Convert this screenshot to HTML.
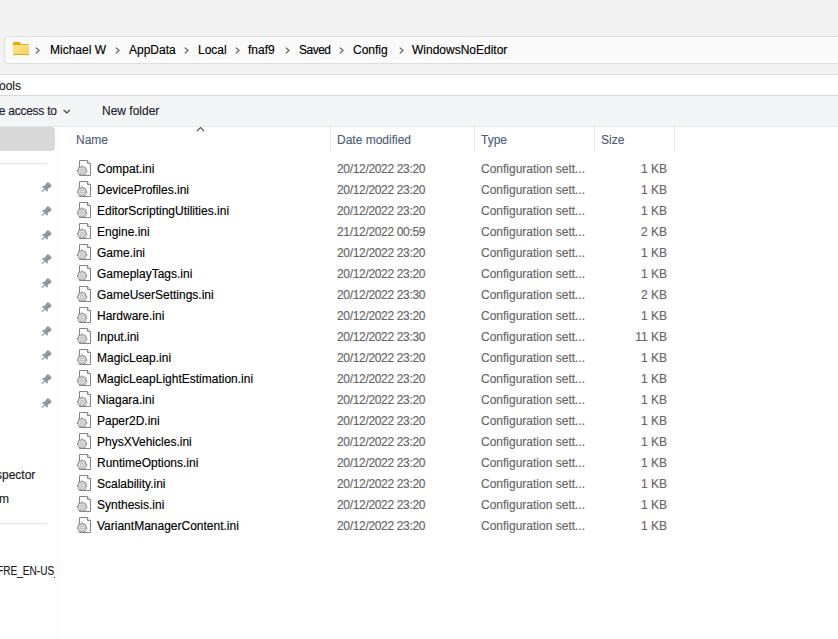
<!DOCTYPE html>
<html><head><meta charset="utf-8"><style>
*{margin:0;padding:0;box-sizing:border-box}
html,body{width:838px;height:639px;overflow:hidden;background:#f3f3f3;font-family:"Liberation Sans",sans-serif;font-size:12px}
.t{position:absolute;white-space:nowrap;line-height:16px;color:#1a1a1a;-webkit-text-stroke:0.15px currentColor}
.gr{color:#666}
.fn{color:#000}
.bc{color:#000}
.tb{color:#1c2130}
.dt{letter-spacing:-0.33px}
.hd{color:#4c607a}
.ic{display:block}
.pin{display:block}
</style></head><body>
<div style="position:absolute;left:4px;top:36px;width:900px;height:28px;background:#fafafa;border:1px solid #dedede;border-radius:4px"></div>
<svg style="position:absolute;left:13px;top:42px" width="16" height="13" viewBox="0 0 16 13"><defs><linearGradient id="fg" x1="0" y1="0" x2="1" y2="1"><stop offset="0" stop-color="#ffe7a0"/><stop offset="1" stop-color="#fccf4c"/></linearGradient></defs><path d="M0 1.2Q0 0 1.2 0H6.8L8.2 1.9H14.8Q16 1.9 16 3.1V5H0Z" fill="#eda90c"/><path d="M0 3.6H7L8 2.9H16V11.8Q16 13 14.8 13H1.2Q0 13 0 11.8Z" fill="url(#fg)"/><path d="M0 3.6H7L8 2.9H16V3.5H8.2L7.2 4.2H0Z" fill="#ffefb8"/><path d="M0 11.9H16V11.8Q16 13 14.8 13H1.2Q0 13 0 11.8Z" fill="#eaa520"/></svg>
<svg style="position:absolute;left:35px;top:47px" width="5" height="7" viewBox="0 0 5 7"><path d="M0.8 0.6L4 3.5L0.8 6.4" fill="none" stroke="#5d5d5d" stroke-width="1.2"/></svg><svg style="position:absolute;left:115px;top:47px" width="5" height="7" viewBox="0 0 5 7"><path d="M0.8 0.6L4 3.5L0.8 6.4" fill="none" stroke="#5d5d5d" stroke-width="1.2"/></svg><svg style="position:absolute;left:184px;top:47px" width="5" height="7" viewBox="0 0 5 7"><path d="M0.8 0.6L4 3.5L0.8 6.4" fill="none" stroke="#5d5d5d" stroke-width="1.2"/></svg><svg style="position:absolute;left:235px;top:47px" width="5" height="7" viewBox="0 0 5 7"><path d="M0.8 0.6L4 3.5L0.8 6.4" fill="none" stroke="#5d5d5d" stroke-width="1.2"/></svg><svg style="position:absolute;left:285px;top:47px" width="5" height="7" viewBox="0 0 5 7"><path d="M0.8 0.6L4 3.5L0.8 6.4" fill="none" stroke="#5d5d5d" stroke-width="1.2"/></svg><svg style="position:absolute;left:339px;top:47px" width="5" height="7" viewBox="0 0 5 7"><path d="M0.8 0.6L4 3.5L0.8 6.4" fill="none" stroke="#5d5d5d" stroke-width="1.2"/></svg><svg style="position:absolute;left:399px;top:47px" width="5" height="7" viewBox="0 0 5 7"><path d="M0.8 0.6L4 3.5L0.8 6.4" fill="none" stroke="#5d5d5d" stroke-width="1.2"/></svg>
<div class="t bc" style="left:50px;top:42px;">Michael W</div><div class="t bc" style="left:129px;top:42px;">AppData</div><div class="t bc" style="left:198px;top:42px;">Local</div><div class="t bc" style="left:248px;top:42px;">fnaf9</div><div class="t bc" style="left:299px;top:42px;letter-spacing:-0.5px">Saved</div><div class="t bc" style="left:353px;top:42px;">Config</div><div class="t bc" style="left:412px;top:42px;">WindowsNoEditor</div>
<div style="position:absolute;left:0;top:74px;width:838px;height:22px;background:#fff;border-top:1px solid #dedede;border-bottom:1px solid #dadada"></div>
<div class="t " style="left:-7px;top:78px;">Tools</div>
<div style="position:absolute;left:0;top:96px;width:838px;height:31px;background:#f4f5f7;border-bottom:1px solid #e6e7e9"></div>
<div class="t tb" style="left:-18.5px;top:103px;letter-spacing:-0.25px">Give access to</div>
<svg style="position:absolute;left:63px;top:108.5px" width="8" height="5" viewBox="0 0 8 5"><path d="M0.6 0.8L3.8 4L7 0.8" fill="none" stroke="#2e3545" stroke-width="1.1"/></svg>
<div class="t tb" style="left:102px;top:103px;">New folder</div>
<div style="position:absolute;left:0;top:127px;width:838px;height:512px;background:#fff"></div>
<div style="position:absolute;left:57px;top:127px;width:1px;height:512px;background:#f3f3f3"></div>
<div style="position:absolute;left:-10px;top:127px;width:65px;height:24px;background:#d9d9d9;border-radius:3px"></div>
<div style="position:absolute;left:0;top:163px;width:47px;height:1px;background:#e0e0e0"></div>
<div style="position:absolute;left:41px;top:181px"><svg class="pin" width="12" height="12" viewBox="0 0 12 12"><g transform="translate(3.8 7.9) rotate(-45)" fill="#8e98a0"><rect x="-0.3" y="-3.6" width="1.7" height="7.2" rx="0.6"/><rect x="1" y="-2.3" width="2.8" height="4.6"/><rect x="3.3" y="-2.8" width="4" height="5.6" rx="1"/><rect x="-4.4" y="-0.6" width="4.4" height="1.2" rx="0.6"/></g></svg></div><div style="position:absolute;left:41px;top:205px"><svg class="pin" width="12" height="12" viewBox="0 0 12 12"><g transform="translate(3.8 7.9) rotate(-45)" fill="#8e98a0"><rect x="-0.3" y="-3.6" width="1.7" height="7.2" rx="0.6"/><rect x="1" y="-2.3" width="2.8" height="4.6"/><rect x="3.3" y="-2.8" width="4" height="5.6" rx="1"/><rect x="-4.4" y="-0.6" width="4.4" height="1.2" rx="0.6"/></g></svg></div><div style="position:absolute;left:41px;top:229px"><svg class="pin" width="12" height="12" viewBox="0 0 12 12"><g transform="translate(3.8 7.9) rotate(-45)" fill="#8e98a0"><rect x="-0.3" y="-3.6" width="1.7" height="7.2" rx="0.6"/><rect x="1" y="-2.3" width="2.8" height="4.6"/><rect x="3.3" y="-2.8" width="4" height="5.6" rx="1"/><rect x="-4.4" y="-0.6" width="4.4" height="1.2" rx="0.6"/></g></svg></div><div style="position:absolute;left:41px;top:253px"><svg class="pin" width="12" height="12" viewBox="0 0 12 12"><g transform="translate(3.8 7.9) rotate(-45)" fill="#8e98a0"><rect x="-0.3" y="-3.6" width="1.7" height="7.2" rx="0.6"/><rect x="1" y="-2.3" width="2.8" height="4.6"/><rect x="3.3" y="-2.8" width="4" height="5.6" rx="1"/><rect x="-4.4" y="-0.6" width="4.4" height="1.2" rx="0.6"/></g></svg></div><div style="position:absolute;left:41px;top:277px"><svg class="pin" width="12" height="12" viewBox="0 0 12 12"><g transform="translate(3.8 7.9) rotate(-45)" fill="#8e98a0"><rect x="-0.3" y="-3.6" width="1.7" height="7.2" rx="0.6"/><rect x="1" y="-2.3" width="2.8" height="4.6"/><rect x="3.3" y="-2.8" width="4" height="5.6" rx="1"/><rect x="-4.4" y="-0.6" width="4.4" height="1.2" rx="0.6"/></g></svg></div><div style="position:absolute;left:41px;top:301px"><svg class="pin" width="12" height="12" viewBox="0 0 12 12"><g transform="translate(3.8 7.9) rotate(-45)" fill="#8e98a0"><rect x="-0.3" y="-3.6" width="1.7" height="7.2" rx="0.6"/><rect x="1" y="-2.3" width="2.8" height="4.6"/><rect x="3.3" y="-2.8" width="4" height="5.6" rx="1"/><rect x="-4.4" y="-0.6" width="4.4" height="1.2" rx="0.6"/></g></svg></div><div style="position:absolute;left:41px;top:325px"><svg class="pin" width="12" height="12" viewBox="0 0 12 12"><g transform="translate(3.8 7.9) rotate(-45)" fill="#8e98a0"><rect x="-0.3" y="-3.6" width="1.7" height="7.2" rx="0.6"/><rect x="1" y="-2.3" width="2.8" height="4.6"/><rect x="3.3" y="-2.8" width="4" height="5.6" rx="1"/><rect x="-4.4" y="-0.6" width="4.4" height="1.2" rx="0.6"/></g></svg></div><div style="position:absolute;left:41px;top:349px"><svg class="pin" width="12" height="12" viewBox="0 0 12 12"><g transform="translate(3.8 7.9) rotate(-45)" fill="#8e98a0"><rect x="-0.3" y="-3.6" width="1.7" height="7.2" rx="0.6"/><rect x="1" y="-2.3" width="2.8" height="4.6"/><rect x="3.3" y="-2.8" width="4" height="5.6" rx="1"/><rect x="-4.4" y="-0.6" width="4.4" height="1.2" rx="0.6"/></g></svg></div><div style="position:absolute;left:41px;top:373px"><svg class="pin" width="12" height="12" viewBox="0 0 12 12"><g transform="translate(3.8 7.9) rotate(-45)" fill="#8e98a0"><rect x="-0.3" y="-3.6" width="1.7" height="7.2" rx="0.6"/><rect x="1" y="-2.3" width="2.8" height="4.6"/><rect x="3.3" y="-2.8" width="4" height="5.6" rx="1"/><rect x="-4.4" y="-0.6" width="4.4" height="1.2" rx="0.6"/></g></svg></div><div style="position:absolute;left:41px;top:397px"><svg class="pin" width="12" height="12" viewBox="0 0 12 12"><g transform="translate(3.8 7.9) rotate(-45)" fill="#8e98a0"><rect x="-0.3" y="-3.6" width="1.7" height="7.2" rx="0.6"/><rect x="1" y="-2.3" width="2.8" height="4.6"/><rect x="3.3" y="-2.8" width="4" height="5.6" rx="1"/><rect x="-4.4" y="-0.6" width="4.4" height="1.2" rx="0.6"/></g></svg></div>
<div style="position:absolute;left:0;top:0;width:55px;height:639px;overflow:hidden"><div class="t " style="left:-14px;top:467px;">Inspector</div><div class="t " style="left:-1px;top:491px;">m</div><div class="t " style="left:-3.5px;top:563px;transform:scaleX(0.84);transform-origin:0 0">FRE_EN-US_EN</div></div>
<div style="position:absolute;left:0;top:523px;width:47px;height:1px;background:#e0e0e0"></div>

<svg style="position:absolute;left:196px;top:126px" width="10" height="6" viewBox="0 0 10 6"><path d="M1 5L4.5 1.5L8 5" fill="none" stroke="#555" stroke-width="1.1"/></svg>
<div class="t hd" style="left:76px;top:132px;">Name</div>
<div class="t hd" style="left:337px;top:132px;">Date modified</div>
<div class="t hd" style="left:481px;top:132px;">Type</div>
<div class="t hd" style="left:601px;top:132px;">Size</div>
<div style="position:absolute;left:330px;top:127px;width:1px;height:25px;background:#e5e5e5"></div>
<div style="position:absolute;left:474px;top:127px;width:1px;height:25px;background:#e5e5e5"></div>
<div style="position:absolute;left:594px;top:127px;width:1px;height:25px;background:#e5e5e5"></div>
<div style="position:absolute;left:674px;top:127px;width:1px;height:25px;background:#e5e5e5"></div>
<div style="position:absolute;left:76px;top:160px"><svg class="ic" width="16" height="16" viewBox="0 0 16 16"><path d="M3.5 0.5H11.5L14.5 3.5V15.5H3.5Z" fill="#fbfbfb" stroke="#858585"/><path d="M11.5 0.5V3.5H14.5" fill="#f0f0f0" stroke="#858585"/><path d="M9.25 9.81L10.63 9.97L10.63 11.63L9.25 11.79L9.00 12.40L9.86 13.49L8.69 14.66L7.60 13.80L6.99 14.05L6.83 15.43L5.17 15.43L5.01 14.05L4.40 13.80L3.31 14.66L2.14 13.49L3.00 12.40L2.75 11.79L1.37 11.63L1.37 9.97L2.75 9.81L3.00 9.20L2.14 8.11L3.31 6.94L4.40 7.80L5.01 7.55L5.17 6.17L6.83 6.17L6.99 7.55L7.60 7.80L8.69 6.94L9.86 8.11L9.00 9.20Z" fill="#e4e6e8" stroke="#7b7b7b" stroke-width="0.9"/><circle cx="6" cy="10.8" r="1.4" fill="#fff" stroke="#909090" stroke-width="0.7"/></svg></div><div class="t fn" style="left:97px;top:161px;">Compat.ini</div><div class="t gr dt" style="left:337px;top:161px;">20/12/2022 23:20</div><div class="t gr" style="left:481px;top:161px;">Configuration sett...</div><div class="t gr" style="right:171px;top:161px">1 KB</div><div style="position:absolute;left:76px;top:181px"><svg class="ic" width="16" height="16" viewBox="0 0 16 16"><path d="M3.5 0.5H11.5L14.5 3.5V15.5H3.5Z" fill="#fbfbfb" stroke="#858585"/><path d="M11.5 0.5V3.5H14.5" fill="#f0f0f0" stroke="#858585"/><path d="M9.25 9.81L10.63 9.97L10.63 11.63L9.25 11.79L9.00 12.40L9.86 13.49L8.69 14.66L7.60 13.80L6.99 14.05L6.83 15.43L5.17 15.43L5.01 14.05L4.40 13.80L3.31 14.66L2.14 13.49L3.00 12.40L2.75 11.79L1.37 11.63L1.37 9.97L2.75 9.81L3.00 9.20L2.14 8.11L3.31 6.94L4.40 7.80L5.01 7.55L5.17 6.17L6.83 6.17L6.99 7.55L7.60 7.80L8.69 6.94L9.86 8.11L9.00 9.20Z" fill="#e4e6e8" stroke="#7b7b7b" stroke-width="0.9"/><circle cx="6" cy="10.8" r="1.4" fill="#fff" stroke="#909090" stroke-width="0.7"/></svg></div><div class="t fn" style="left:97px;top:182px;">DeviceProfiles.ini</div><div class="t gr dt" style="left:337px;top:182px;">20/12/2022 23:20</div><div class="t gr" style="left:481px;top:182px;">Configuration sett...</div><div class="t gr" style="right:171px;top:182px">1 KB</div><div style="position:absolute;left:76px;top:202px"><svg class="ic" width="16" height="16" viewBox="0 0 16 16"><path d="M3.5 0.5H11.5L14.5 3.5V15.5H3.5Z" fill="#fbfbfb" stroke="#858585"/><path d="M11.5 0.5V3.5H14.5" fill="#f0f0f0" stroke="#858585"/><path d="M9.25 9.81L10.63 9.97L10.63 11.63L9.25 11.79L9.00 12.40L9.86 13.49L8.69 14.66L7.60 13.80L6.99 14.05L6.83 15.43L5.17 15.43L5.01 14.05L4.40 13.80L3.31 14.66L2.14 13.49L3.00 12.40L2.75 11.79L1.37 11.63L1.37 9.97L2.75 9.81L3.00 9.20L2.14 8.11L3.31 6.94L4.40 7.80L5.01 7.55L5.17 6.17L6.83 6.17L6.99 7.55L7.60 7.80L8.69 6.94L9.86 8.11L9.00 9.20Z" fill="#e4e6e8" stroke="#7b7b7b" stroke-width="0.9"/><circle cx="6" cy="10.8" r="1.4" fill="#fff" stroke="#909090" stroke-width="0.7"/></svg></div><div class="t fn" style="left:97px;top:203px;">EditorScriptingUtilities.ini</div><div class="t gr dt" style="left:337px;top:203px;">20/12/2022 23:20</div><div class="t gr" style="left:481px;top:203px;">Configuration sett...</div><div class="t gr" style="right:171px;top:203px">1 KB</div><div style="position:absolute;left:76px;top:223px"><svg class="ic" width="16" height="16" viewBox="0 0 16 16"><path d="M3.5 0.5H11.5L14.5 3.5V15.5H3.5Z" fill="#fbfbfb" stroke="#858585"/><path d="M11.5 0.5V3.5H14.5" fill="#f0f0f0" stroke="#858585"/><path d="M9.25 9.81L10.63 9.97L10.63 11.63L9.25 11.79L9.00 12.40L9.86 13.49L8.69 14.66L7.60 13.80L6.99 14.05L6.83 15.43L5.17 15.43L5.01 14.05L4.40 13.80L3.31 14.66L2.14 13.49L3.00 12.40L2.75 11.79L1.37 11.63L1.37 9.97L2.75 9.81L3.00 9.20L2.14 8.11L3.31 6.94L4.40 7.80L5.01 7.55L5.17 6.17L6.83 6.17L6.99 7.55L7.60 7.80L8.69 6.94L9.86 8.11L9.00 9.20Z" fill="#e4e6e8" stroke="#7b7b7b" stroke-width="0.9"/><circle cx="6" cy="10.8" r="1.4" fill="#fff" stroke="#909090" stroke-width="0.7"/></svg></div><div class="t fn" style="left:97px;top:224px;">Engine.ini</div><div class="t gr dt" style="left:337px;top:224px;">21/12/2022 00:59</div><div class="t gr" style="left:481px;top:224px;">Configuration sett...</div><div class="t gr" style="right:171px;top:224px">2 KB</div><div style="position:absolute;left:76px;top:244px"><svg class="ic" width="16" height="16" viewBox="0 0 16 16"><path d="M3.5 0.5H11.5L14.5 3.5V15.5H3.5Z" fill="#fbfbfb" stroke="#858585"/><path d="M11.5 0.5V3.5H14.5" fill="#f0f0f0" stroke="#858585"/><path d="M9.25 9.81L10.63 9.97L10.63 11.63L9.25 11.79L9.00 12.40L9.86 13.49L8.69 14.66L7.60 13.80L6.99 14.05L6.83 15.43L5.17 15.43L5.01 14.05L4.40 13.80L3.31 14.66L2.14 13.49L3.00 12.40L2.75 11.79L1.37 11.63L1.37 9.97L2.75 9.81L3.00 9.20L2.14 8.11L3.31 6.94L4.40 7.80L5.01 7.55L5.17 6.17L6.83 6.17L6.99 7.55L7.60 7.80L8.69 6.94L9.86 8.11L9.00 9.20Z" fill="#e4e6e8" stroke="#7b7b7b" stroke-width="0.9"/><circle cx="6" cy="10.8" r="1.4" fill="#fff" stroke="#909090" stroke-width="0.7"/></svg></div><div class="t fn" style="left:97px;top:245px;">Game.ini</div><div class="t gr dt" style="left:337px;top:245px;">20/12/2022 23:20</div><div class="t gr" style="left:481px;top:245px;">Configuration sett...</div><div class="t gr" style="right:171px;top:245px">1 KB</div><div style="position:absolute;left:76px;top:265px"><svg class="ic" width="16" height="16" viewBox="0 0 16 16"><path d="M3.5 0.5H11.5L14.5 3.5V15.5H3.5Z" fill="#fbfbfb" stroke="#858585"/><path d="M11.5 0.5V3.5H14.5" fill="#f0f0f0" stroke="#858585"/><path d="M9.25 9.81L10.63 9.97L10.63 11.63L9.25 11.79L9.00 12.40L9.86 13.49L8.69 14.66L7.60 13.80L6.99 14.05L6.83 15.43L5.17 15.43L5.01 14.05L4.40 13.80L3.31 14.66L2.14 13.49L3.00 12.40L2.75 11.79L1.37 11.63L1.37 9.97L2.75 9.81L3.00 9.20L2.14 8.11L3.31 6.94L4.40 7.80L5.01 7.55L5.17 6.17L6.83 6.17L6.99 7.55L7.60 7.80L8.69 6.94L9.86 8.11L9.00 9.20Z" fill="#e4e6e8" stroke="#7b7b7b" stroke-width="0.9"/><circle cx="6" cy="10.8" r="1.4" fill="#fff" stroke="#909090" stroke-width="0.7"/></svg></div><div class="t fn" style="left:97px;top:266px;">GameplayTags.ini</div><div class="t gr dt" style="left:337px;top:266px;">20/12/2022 23:20</div><div class="t gr" style="left:481px;top:266px;">Configuration sett...</div><div class="t gr" style="right:171px;top:266px">1 KB</div><div style="position:absolute;left:76px;top:286px"><svg class="ic" width="16" height="16" viewBox="0 0 16 16"><path d="M3.5 0.5H11.5L14.5 3.5V15.5H3.5Z" fill="#fbfbfb" stroke="#858585"/><path d="M11.5 0.5V3.5H14.5" fill="#f0f0f0" stroke="#858585"/><path d="M9.25 9.81L10.63 9.97L10.63 11.63L9.25 11.79L9.00 12.40L9.86 13.49L8.69 14.66L7.60 13.80L6.99 14.05L6.83 15.43L5.17 15.43L5.01 14.05L4.40 13.80L3.31 14.66L2.14 13.49L3.00 12.40L2.75 11.79L1.37 11.63L1.37 9.97L2.75 9.81L3.00 9.20L2.14 8.11L3.31 6.94L4.40 7.80L5.01 7.55L5.17 6.17L6.83 6.17L6.99 7.55L7.60 7.80L8.69 6.94L9.86 8.11L9.00 9.20Z" fill="#e4e6e8" stroke="#7b7b7b" stroke-width="0.9"/><circle cx="6" cy="10.8" r="1.4" fill="#fff" stroke="#909090" stroke-width="0.7"/></svg></div><div class="t fn" style="left:97px;top:287px;">GameUserSettings.ini</div><div class="t gr dt" style="left:337px;top:287px;">20/12/2022 23:30</div><div class="t gr" style="left:481px;top:287px;">Configuration sett...</div><div class="t gr" style="right:171px;top:287px">2 KB</div><div style="position:absolute;left:76px;top:307px"><svg class="ic" width="16" height="16" viewBox="0 0 16 16"><path d="M3.5 0.5H11.5L14.5 3.5V15.5H3.5Z" fill="#fbfbfb" stroke="#858585"/><path d="M11.5 0.5V3.5H14.5" fill="#f0f0f0" stroke="#858585"/><path d="M9.25 9.81L10.63 9.97L10.63 11.63L9.25 11.79L9.00 12.40L9.86 13.49L8.69 14.66L7.60 13.80L6.99 14.05L6.83 15.43L5.17 15.43L5.01 14.05L4.40 13.80L3.31 14.66L2.14 13.49L3.00 12.40L2.75 11.79L1.37 11.63L1.37 9.97L2.75 9.81L3.00 9.20L2.14 8.11L3.31 6.94L4.40 7.80L5.01 7.55L5.17 6.17L6.83 6.17L6.99 7.55L7.60 7.80L8.69 6.94L9.86 8.11L9.00 9.20Z" fill="#e4e6e8" stroke="#7b7b7b" stroke-width="0.9"/><circle cx="6" cy="10.8" r="1.4" fill="#fff" stroke="#909090" stroke-width="0.7"/></svg></div><div class="t fn" style="left:97px;top:308px;">Hardware.ini</div><div class="t gr dt" style="left:337px;top:308px;">20/12/2022 23:20</div><div class="t gr" style="left:481px;top:308px;">Configuration sett...</div><div class="t gr" style="right:171px;top:308px">1 KB</div><div style="position:absolute;left:76px;top:328px"><svg class="ic" width="16" height="16" viewBox="0 0 16 16"><path d="M3.5 0.5H11.5L14.5 3.5V15.5H3.5Z" fill="#fbfbfb" stroke="#858585"/><path d="M11.5 0.5V3.5H14.5" fill="#f0f0f0" stroke="#858585"/><path d="M9.25 9.81L10.63 9.97L10.63 11.63L9.25 11.79L9.00 12.40L9.86 13.49L8.69 14.66L7.60 13.80L6.99 14.05L6.83 15.43L5.17 15.43L5.01 14.05L4.40 13.80L3.31 14.66L2.14 13.49L3.00 12.40L2.75 11.79L1.37 11.63L1.37 9.97L2.75 9.81L3.00 9.20L2.14 8.11L3.31 6.94L4.40 7.80L5.01 7.55L5.17 6.17L6.83 6.17L6.99 7.55L7.60 7.80L8.69 6.94L9.86 8.11L9.00 9.20Z" fill="#e4e6e8" stroke="#7b7b7b" stroke-width="0.9"/><circle cx="6" cy="10.8" r="1.4" fill="#fff" stroke="#909090" stroke-width="0.7"/></svg></div><div class="t fn" style="left:97px;top:329px;">Input.ini</div><div class="t gr dt" style="left:337px;top:329px;">20/12/2022 23:30</div><div class="t gr" style="left:481px;top:329px;">Configuration sett...</div><div class="t gr" style="right:171px;top:329px">11 KB</div><div style="position:absolute;left:76px;top:349px"><svg class="ic" width="16" height="16" viewBox="0 0 16 16"><path d="M3.5 0.5H11.5L14.5 3.5V15.5H3.5Z" fill="#fbfbfb" stroke="#858585"/><path d="M11.5 0.5V3.5H14.5" fill="#f0f0f0" stroke="#858585"/><path d="M9.25 9.81L10.63 9.97L10.63 11.63L9.25 11.79L9.00 12.40L9.86 13.49L8.69 14.66L7.60 13.80L6.99 14.05L6.83 15.43L5.17 15.43L5.01 14.05L4.40 13.80L3.31 14.66L2.14 13.49L3.00 12.40L2.75 11.79L1.37 11.63L1.37 9.97L2.75 9.81L3.00 9.20L2.14 8.11L3.31 6.94L4.40 7.80L5.01 7.55L5.17 6.17L6.83 6.17L6.99 7.55L7.60 7.80L8.69 6.94L9.86 8.11L9.00 9.20Z" fill="#e4e6e8" stroke="#7b7b7b" stroke-width="0.9"/><circle cx="6" cy="10.8" r="1.4" fill="#fff" stroke="#909090" stroke-width="0.7"/></svg></div><div class="t fn" style="left:97px;top:350px;">MagicLeap.ini</div><div class="t gr dt" style="left:337px;top:350px;">20/12/2022 23:20</div><div class="t gr" style="left:481px;top:350px;">Configuration sett...</div><div class="t gr" style="right:171px;top:350px">1 KB</div><div style="position:absolute;left:76px;top:370px"><svg class="ic" width="16" height="16" viewBox="0 0 16 16"><path d="M3.5 0.5H11.5L14.5 3.5V15.5H3.5Z" fill="#fbfbfb" stroke="#858585"/><path d="M11.5 0.5V3.5H14.5" fill="#f0f0f0" stroke="#858585"/><path d="M9.25 9.81L10.63 9.97L10.63 11.63L9.25 11.79L9.00 12.40L9.86 13.49L8.69 14.66L7.60 13.80L6.99 14.05L6.83 15.43L5.17 15.43L5.01 14.05L4.40 13.80L3.31 14.66L2.14 13.49L3.00 12.40L2.75 11.79L1.37 11.63L1.37 9.97L2.75 9.81L3.00 9.20L2.14 8.11L3.31 6.94L4.40 7.80L5.01 7.55L5.17 6.17L6.83 6.17L6.99 7.55L7.60 7.80L8.69 6.94L9.86 8.11L9.00 9.20Z" fill="#e4e6e8" stroke="#7b7b7b" stroke-width="0.9"/><circle cx="6" cy="10.8" r="1.4" fill="#fff" stroke="#909090" stroke-width="0.7"/></svg></div><div class="t fn" style="left:97px;top:371px;">MagicLeapLightEstimation.ini</div><div class="t gr dt" style="left:337px;top:371px;">20/12/2022 23:20</div><div class="t gr" style="left:481px;top:371px;">Configuration sett...</div><div class="t gr" style="right:171px;top:371px">1 KB</div><div style="position:absolute;left:76px;top:391px"><svg class="ic" width="16" height="16" viewBox="0 0 16 16"><path d="M3.5 0.5H11.5L14.5 3.5V15.5H3.5Z" fill="#fbfbfb" stroke="#858585"/><path d="M11.5 0.5V3.5H14.5" fill="#f0f0f0" stroke="#858585"/><path d="M9.25 9.81L10.63 9.97L10.63 11.63L9.25 11.79L9.00 12.40L9.86 13.49L8.69 14.66L7.60 13.80L6.99 14.05L6.83 15.43L5.17 15.43L5.01 14.05L4.40 13.80L3.31 14.66L2.14 13.49L3.00 12.40L2.75 11.79L1.37 11.63L1.37 9.97L2.75 9.81L3.00 9.20L2.14 8.11L3.31 6.94L4.40 7.80L5.01 7.55L5.17 6.17L6.83 6.17L6.99 7.55L7.60 7.80L8.69 6.94L9.86 8.11L9.00 9.20Z" fill="#e4e6e8" stroke="#7b7b7b" stroke-width="0.9"/><circle cx="6" cy="10.8" r="1.4" fill="#fff" stroke="#909090" stroke-width="0.7"/></svg></div><div class="t fn" style="left:97px;top:392px;">Niagara.ini</div><div class="t gr dt" style="left:337px;top:392px;">20/12/2022 23:20</div><div class="t gr" style="left:481px;top:392px;">Configuration sett...</div><div class="t gr" style="right:171px;top:392px">1 KB</div><div style="position:absolute;left:76px;top:412px"><svg class="ic" width="16" height="16" viewBox="0 0 16 16"><path d="M3.5 0.5H11.5L14.5 3.5V15.5H3.5Z" fill="#fbfbfb" stroke="#858585"/><path d="M11.5 0.5V3.5H14.5" fill="#f0f0f0" stroke="#858585"/><path d="M9.25 9.81L10.63 9.97L10.63 11.63L9.25 11.79L9.00 12.40L9.86 13.49L8.69 14.66L7.60 13.80L6.99 14.05L6.83 15.43L5.17 15.43L5.01 14.05L4.40 13.80L3.31 14.66L2.14 13.49L3.00 12.40L2.75 11.79L1.37 11.63L1.37 9.97L2.75 9.81L3.00 9.20L2.14 8.11L3.31 6.94L4.40 7.80L5.01 7.55L5.17 6.17L6.83 6.17L6.99 7.55L7.60 7.80L8.69 6.94L9.86 8.11L9.00 9.20Z" fill="#e4e6e8" stroke="#7b7b7b" stroke-width="0.9"/><circle cx="6" cy="10.8" r="1.4" fill="#fff" stroke="#909090" stroke-width="0.7"/></svg></div><div class="t fn" style="left:97px;top:413px;">Paper2D.ini</div><div class="t gr dt" style="left:337px;top:413px;">20/12/2022 23:20</div><div class="t gr" style="left:481px;top:413px;">Configuration sett...</div><div class="t gr" style="right:171px;top:413px">1 KB</div><div style="position:absolute;left:76px;top:433px"><svg class="ic" width="16" height="16" viewBox="0 0 16 16"><path d="M3.5 0.5H11.5L14.5 3.5V15.5H3.5Z" fill="#fbfbfb" stroke="#858585"/><path d="M11.5 0.5V3.5H14.5" fill="#f0f0f0" stroke="#858585"/><path d="M9.25 9.81L10.63 9.97L10.63 11.63L9.25 11.79L9.00 12.40L9.86 13.49L8.69 14.66L7.60 13.80L6.99 14.05L6.83 15.43L5.17 15.43L5.01 14.05L4.40 13.80L3.31 14.66L2.14 13.49L3.00 12.40L2.75 11.79L1.37 11.63L1.37 9.97L2.75 9.81L3.00 9.20L2.14 8.11L3.31 6.94L4.40 7.80L5.01 7.55L5.17 6.17L6.83 6.17L6.99 7.55L7.60 7.80L8.69 6.94L9.86 8.11L9.00 9.20Z" fill="#e4e6e8" stroke="#7b7b7b" stroke-width="0.9"/><circle cx="6" cy="10.8" r="1.4" fill="#fff" stroke="#909090" stroke-width="0.7"/></svg></div><div class="t fn" style="left:97px;top:434px;">PhysXVehicles.ini</div><div class="t gr dt" style="left:337px;top:434px;">20/12/2022 23:20</div><div class="t gr" style="left:481px;top:434px;">Configuration sett...</div><div class="t gr" style="right:171px;top:434px">1 KB</div><div style="position:absolute;left:76px;top:454px"><svg class="ic" width="16" height="16" viewBox="0 0 16 16"><path d="M3.5 0.5H11.5L14.5 3.5V15.5H3.5Z" fill="#fbfbfb" stroke="#858585"/><path d="M11.5 0.5V3.5H14.5" fill="#f0f0f0" stroke="#858585"/><path d="M9.25 9.81L10.63 9.97L10.63 11.63L9.25 11.79L9.00 12.40L9.86 13.49L8.69 14.66L7.60 13.80L6.99 14.05L6.83 15.43L5.17 15.43L5.01 14.05L4.40 13.80L3.31 14.66L2.14 13.49L3.00 12.40L2.75 11.79L1.37 11.63L1.37 9.97L2.75 9.81L3.00 9.20L2.14 8.11L3.31 6.94L4.40 7.80L5.01 7.55L5.17 6.17L6.83 6.17L6.99 7.55L7.60 7.80L8.69 6.94L9.86 8.11L9.00 9.20Z" fill="#e4e6e8" stroke="#7b7b7b" stroke-width="0.9"/><circle cx="6" cy="10.8" r="1.4" fill="#fff" stroke="#909090" stroke-width="0.7"/></svg></div><div class="t fn" style="left:97px;top:455px;">RuntimeOptions.ini</div><div class="t gr dt" style="left:337px;top:455px;">20/12/2022 23:20</div><div class="t gr" style="left:481px;top:455px;">Configuration sett...</div><div class="t gr" style="right:171px;top:455px">1 KB</div><div style="position:absolute;left:76px;top:475px"><svg class="ic" width="16" height="16" viewBox="0 0 16 16"><path d="M3.5 0.5H11.5L14.5 3.5V15.5H3.5Z" fill="#fbfbfb" stroke="#858585"/><path d="M11.5 0.5V3.5H14.5" fill="#f0f0f0" stroke="#858585"/><path d="M9.25 9.81L10.63 9.97L10.63 11.63L9.25 11.79L9.00 12.40L9.86 13.49L8.69 14.66L7.60 13.80L6.99 14.05L6.83 15.43L5.17 15.43L5.01 14.05L4.40 13.80L3.31 14.66L2.14 13.49L3.00 12.40L2.75 11.79L1.37 11.63L1.37 9.97L2.75 9.81L3.00 9.20L2.14 8.11L3.31 6.94L4.40 7.80L5.01 7.55L5.17 6.17L6.83 6.17L6.99 7.55L7.60 7.80L8.69 6.94L9.86 8.11L9.00 9.20Z" fill="#e4e6e8" stroke="#7b7b7b" stroke-width="0.9"/><circle cx="6" cy="10.8" r="1.4" fill="#fff" stroke="#909090" stroke-width="0.7"/></svg></div><div class="t fn" style="left:97px;top:476px;">Scalability.ini</div><div class="t gr dt" style="left:337px;top:476px;">20/12/2022 23:20</div><div class="t gr" style="left:481px;top:476px;">Configuration sett...</div><div class="t gr" style="right:171px;top:476px">1 KB</div><div style="position:absolute;left:76px;top:496px"><svg class="ic" width="16" height="16" viewBox="0 0 16 16"><path d="M3.5 0.5H11.5L14.5 3.5V15.5H3.5Z" fill="#fbfbfb" stroke="#858585"/><path d="M11.5 0.5V3.5H14.5" fill="#f0f0f0" stroke="#858585"/><path d="M9.25 9.81L10.63 9.97L10.63 11.63L9.25 11.79L9.00 12.40L9.86 13.49L8.69 14.66L7.60 13.80L6.99 14.05L6.83 15.43L5.17 15.43L5.01 14.05L4.40 13.80L3.31 14.66L2.14 13.49L3.00 12.40L2.75 11.79L1.37 11.63L1.37 9.97L2.75 9.81L3.00 9.20L2.14 8.11L3.31 6.94L4.40 7.80L5.01 7.55L5.17 6.17L6.83 6.17L6.99 7.55L7.60 7.80L8.69 6.94L9.86 8.11L9.00 9.20Z" fill="#e4e6e8" stroke="#7b7b7b" stroke-width="0.9"/><circle cx="6" cy="10.8" r="1.4" fill="#fff" stroke="#909090" stroke-width="0.7"/></svg></div><div class="t fn" style="left:97px;top:497px;">Synthesis.ini</div><div class="t gr dt" style="left:337px;top:497px;">20/12/2022 23:20</div><div class="t gr" style="left:481px;top:497px;">Configuration sett...</div><div class="t gr" style="right:171px;top:497px">1 KB</div><div style="position:absolute;left:76px;top:517px"><svg class="ic" width="16" height="16" viewBox="0 0 16 16"><path d="M3.5 0.5H11.5L14.5 3.5V15.5H3.5Z" fill="#fbfbfb" stroke="#858585"/><path d="M11.5 0.5V3.5H14.5" fill="#f0f0f0" stroke="#858585"/><path d="M9.25 9.81L10.63 9.97L10.63 11.63L9.25 11.79L9.00 12.40L9.86 13.49L8.69 14.66L7.60 13.80L6.99 14.05L6.83 15.43L5.17 15.43L5.01 14.05L4.40 13.80L3.31 14.66L2.14 13.49L3.00 12.40L2.75 11.79L1.37 11.63L1.37 9.97L2.75 9.81L3.00 9.20L2.14 8.11L3.31 6.94L4.40 7.80L5.01 7.55L5.17 6.17L6.83 6.17L6.99 7.55L7.60 7.80L8.69 6.94L9.86 8.11L9.00 9.20Z" fill="#e4e6e8" stroke="#7b7b7b" stroke-width="0.9"/><circle cx="6" cy="10.8" r="1.4" fill="#fff" stroke="#909090" stroke-width="0.7"/></svg></div><div class="t fn" style="left:97px;top:518px;">VariantManagerContent.ini</div><div class="t gr dt" style="left:337px;top:518px;">20/12/2022 23:20</div><div class="t gr" style="left:481px;top:518px;">Configuration sett...</div><div class="t gr" style="right:171px;top:518px">1 KB</div>
</body></html>
